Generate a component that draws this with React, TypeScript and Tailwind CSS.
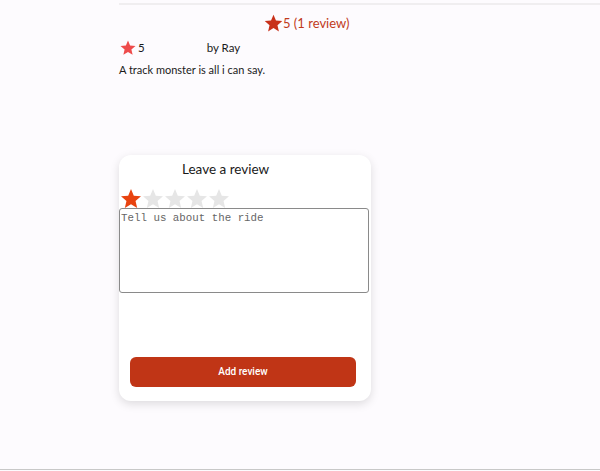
import React from 'react';

const Star: React.FC<{ className?: string }> = ({ className }) => (
  <svg viewBox="0 0 24 24" className={className} fill="currentColor">
    <path d="M12 17.27L18.18 21l-1.64-7.03L22 9.24l-7.19-.61L12 2 9.19 8.63 2 9.24l5.46 4.73L5.82 21z" />
  </svg>
);

export default function App() {
  const rating = 1;

  return (
    <div className="flex h-[471px] w-[600px] flex-col overflow-hidden bg-[#fdfbfe] font-['Lato',sans-serif] text-[#1a1a1a]">
      {/* top rule */}
      <div className="ml-[119px] mt-[3px] h-[2px] bg-[#f0eef0]" />

      {/* summary */}
      <div className="mt-[8px] flex items-center pl-[263px] text-[13px] text-[#c13a1c]">
        <Star className="h-[21px] w-[21px] text-[#c8311a]" />
        <span className="-ml-[1px]">5 (1 review)</span>
      </div>

      {/* single review */}
      <div className="ml-[119px] mt-[5px] flex items-center text-[11.5px]">
        <Star className="h-[18px] w-[18px] text-[#ee4b4b]" />
        <span className="ml-[1px]">5</span>
        <span className="ml-[62px]">by Ray</span>
      </div>
      <p className="ml-[119px] mt-[5px] text-[11px]">A track monster is all i can say.</p>

      {/* review form */}
      <div className="ml-[119px] mt-[76px] flex h-[246px] w-[252px] flex-col rounded-[12px] bg-white shadow-[0_3px_10px_rgba(0,0,0,0.13)]">
        <h3 className="ml-[63px] mt-[4px] text-[13.5px]">Leave a review</h3>
        <div className="mt-[8px] flex">
          {[1, 2, 3, 4, 5].map(i => (
            <Star
              key={i}
              className={`-mr-[2px] h-[24px] w-[24px] ${i <= rating ? 'text-[#e8430f]' : 'text-[#e6e6e6]'}`}
            />
          ))}
        </div>
        <textarea
          className="-mt-[3px] h-[85px] w-[250px] resize-none rounded-[3px] border border-[#8a8a8a] bg-white px-[1px] py-[1px] font-['Liberation_Mono',monospace] text-[10.8px] text-[#333] placeholder:text-[#666] focus:outline-none"
          placeholder="Tell us about the ride"
        />
        <button className="ml-[11px] mr-[15px] mt-[64px] h-[30px] rounded-[6px] bg-[#c03516] font-['Roboto',sans-serif] text-[10px] font-medium text-white">
          Add review
        </button>
      </div>

      <div className="mt-auto mb-[1px] h-[1px] bg-[#c8c8c8]" />
    </div>
  );
}
